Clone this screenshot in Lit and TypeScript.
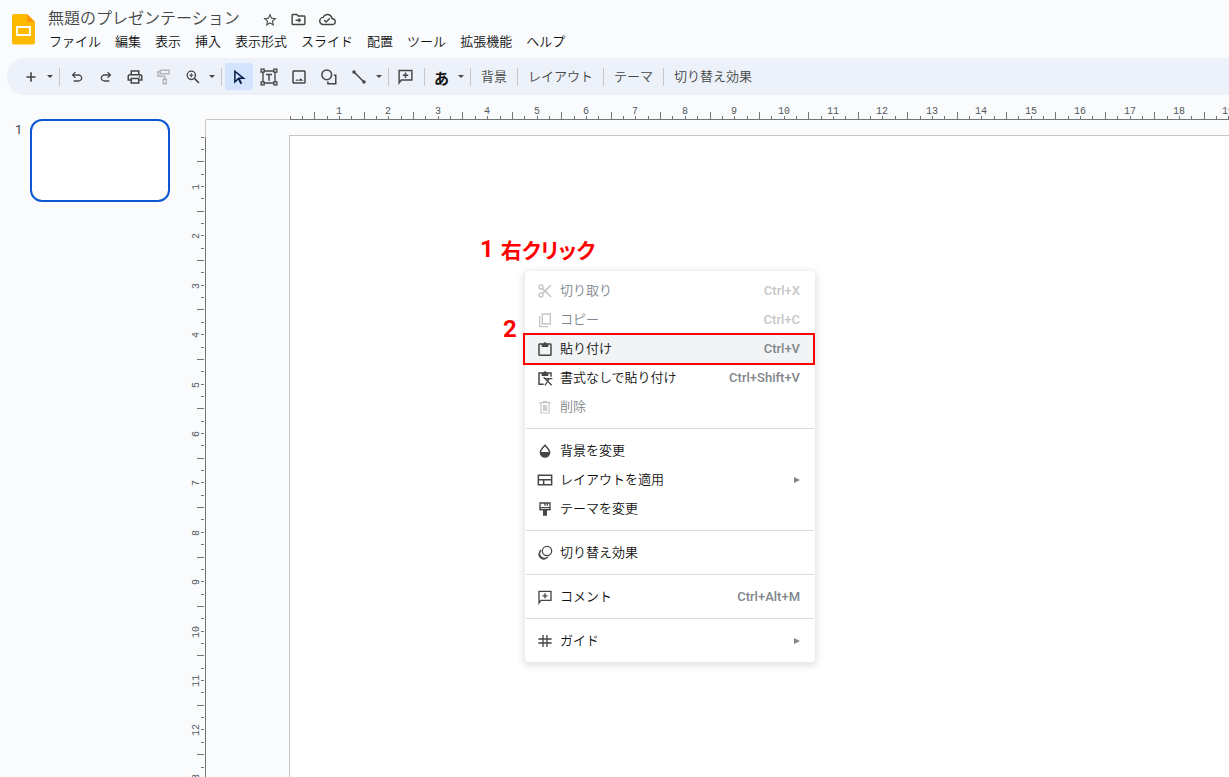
import { LitElement, html, svg, css, nothing, type SVGTemplateResult } from "lit";
import { customElement, property, state } from "lit/decorators.js";
import { classMap } from "lit/directives/class-map.js";

const stroke = (d: string, w = 2) =>
  svg`<path d=${d} fill="none" stroke="currentColor" stroke-width=${w}></path>`;
const fill = (d: string) => svg`<path d=${d} fill="currentColor" fill-rule="evenodd"></path>`;

const UNDO =
  "M7 19v-2h7.1q1.575 0 2.737-1T18 13.5q0-1.5-1.163-2.5T14.1 10H7.8l2.6 2.6L9 14 4 9l5-5 1.4 1.4L7.8 8h6.3q2.425 0 4.163 1.575T20 13.5q0 2.35-1.737 3.925T14.1 19z";
const CLIP = "M7 4h3a2 2 0 0 1 4 0h3v5H7z";

const ICONS: Record<string, SVGTemplateResult> = {
  star: fill(
    "M22 9.24l-7.19-.62L12 2 9.19 8.63 2 9.24l5.46 4.73L5.82 21 12 17.27 18.18 21l-1.63-7.03L22 9.24zM12 15.4l-3.76 2.27 1-4.28-3.32-2.88 4.38-.38L12 6.1l1.71 4.04 4.38.38-3.32 2.88 1 4.28L12 15.4z"
  ),
  move: svg`${fill(
    "M20 6h-8l-2-2H4c-1.1 0-2 .9-2 2v12c0 1.1.9 2 2 2h16c1.1 0 2-.9 2-2V8c0-1.1-.9-2-2-2zm0 12H4V6h5.17l2 2H20v10z"
  )}${fill("M12 12V9l4 4-4 4v-3H8v-2z")}`,
  cloud: fill(
    "M19.35 10.04C18.67 6.59 15.64 4 12 4 9.11 4 6.6 5.64 5.35 8.04 2.34 8.36 0 10.91 0 14c0 3.31 2.69 6 6 6h13c2.76 0 5-2.24 5-5 0-2.64-2.05-4.78-4.65-4.96zM19 18H6c-2.21 0-4-1.79-4-4 0-2.05 1.53-3.76 3.56-3.97l1.07-.11.5-.95C8.08 7.14 9.94 6 12 6c2.62 0 4.88 1.86 5.39 4.43l.3 1.5 1.53.11c1.56.1 2.78 1.41 2.78 2.96 0 1.65-1.35 3-3 3zm-9-3.82l-2.09-2.09L6.5 13.5 10 17l6.01-6.01-1.41-1.41z"
  ),
  plus: stroke("M12 5v14M5 12h14", 2.4),
  undo: fill(UNDO),
  redo: svg`<g transform="translate(24 0) scale(-1 1)">${fill(UNDO)}</g>`,
  print: svg`${fill(
    "M19 8h-1V3H6v5H5c-1.66 0-3 1.34-3 3v6h4v4h12v-4h4v-6c0-1.66-1.34-3-3-3zM8 5h8v3H8V5zm8 12v2H8v-4h8v2zm2-2v-2H6v2H4v-4c0-.55.45-1 1-1h14c.55 0 1 .45 1 1v4h-2z"
  )}<circle cx="18" cy="11.5" r="1" fill="currentColor"></circle>`,
  roller: stroke("M7 3h12v4.500H7zM7 5H4v6h9v4M11 15h4v6h-4z"),
  zoom: svg`${stroke("M14.500 14.500L21 21", 2.4)}<circle cx="9.500" cy="9.500" r="6.200" fill="none" stroke="currentColor" stroke-width="2"></circle>${stroke("M9.500 6.500v6M6.500 9.500h6", 1.6)}`,
  cursor: svg`${stroke("M6.500 4.500l11.500 9h-6.300l-5.200 5z")}${stroke("M11.500 13.500l3.500 7.500", 2.6)}`,
  textbox: svg`${stroke("M4 4h16v16H4z", 1.8)}${[
    [1, 1], [18, 1], [1, 18], [18, 18],
  ].map(
    ([x, y]) =>
      svg`<rect x=${x + 0.5} y=${y + 0.5} width="4" height="4" fill="#edf2fa" stroke="currentColor" stroke-width="1.800"></rect>`
  )}${stroke("M8 8.500h8M12 8.500V17")}`,
  image: fill(
    "M19 5v14H5V5h14m0-2H5c-1.100 0-2 .9-2 2v14c0 1.100.9 2 2 2h14c1.100 0 2-.9 2-2V5c0-1.100-.9-2-2-2zm-5 10.500l-2.500 3-1.800-2L7 17h11z"
  ),
  shape: svg`<circle cx="9" cy="9" r="6.500" fill="none" stroke="currentColor" stroke-width="2"></circle>${stroke("M18.500 9.500H21V21H10.500v-3")}`,
  line: svg`${stroke("M4.500 4.500l15 15", 2.4)}<circle cx="4.500" cy="4.500" r="2.600" fill="currentColor"></circle><circle cx="19.500" cy="19.500" r="2.600" fill="currentColor"></circle>`,
  comment: svg`${stroke("M3 21V3.500h18V17H6z")}${stroke("M12 6.500v7.500M8.200 10.200h7.600")}`,
  cut: svg`<circle cx="6" cy="6" r="3" fill="none" stroke="currentColor" stroke-width="2"></circle><circle cx="6" cy="18" r="3" fill="none" stroke="currentColor" stroke-width="2"></circle>${stroke("M8 8l13 13M8 16L21 3", 2.6)}`,
  copy: stroke("M8 3h12v15H8zM4 6v16h13", 2),
  paste: svg`<rect x="3" y="4.500" width="18" height="17" rx="1" fill="none" stroke="currentColor" stroke-width="2.200"></rect>${fill(CLIP)}`,
  pastePlain: svg`${stroke("M10 21.500H3v-17h18V10", 2.2)}${fill(CLIP)}${stroke("M12 13h11M18 13l-2 4M10 11l12 12M15 18l-3 5", 2)}`,
  trash: stroke("M3.500 5.500h17M9 4h6M6 6v15h12V6M10 9v9M12 9v9M14 9v9", 1.8),
  drop: svg`${stroke("M12 3.500c-3.500 4-7 7-7 10.500a7 7 0 0 0 14 0C19 10.500 15.500 7.500 12 3.500z", 2.2)}${fill("M4.500 13.500h15a7.500 7.500 0 0 1-15 0z")}`,
  layout: stroke("M2 5h20v14H2zM2 11.500h20M10 11.500V19", 2.2),
  brush: svg`${stroke("M4.500 13V3h15v10zM4.500 10h15M12 3v4M15.500 3v4")}${fill("M4 12h16v2h-5v8H9v-8H4z")}`,
  transition: svg`<g fill="none" stroke="currentColor" stroke-width="1.900"><circle cx="15" cy="9" r="7"></circle><path d="M6 7.500a7 7 0 1 0 10.500 10.500"></path><path d="M4 10.500a7 7 0 0 0 9.500 9.500"></path></g>`,
  guide: stroke("M9 3v18M15 3v18M2 9h20M2 15h20"),
};

@customElement("ui-icon")
export class UiIcon extends LitElement {
  @property() name = "";
  @property({ type: Number }) size = 18;

  static styles = css`
    :host {
      display: inline-flex;
      flex: none;
    }
  `;

  render() {
    return html`<svg width=${this.size} height=${this.size} viewBox="0 0 24 24" aria-hidden="true">
      ${ICONS[this.name]}
    </svg>`;
  }
}

/** Centimetre ruler: a short tick each quarter, a long one at the half, a number at the whole. */
@customElement("slide-ruler")
export class SlideRuler extends LitElement {
  @property({ type: Boolean }) vertical = false;
  @property({ type: Number }) origin = 0;
  @state() private extent = 0;

  private observer = new ResizeObserver(() => this.measure());

  static styles = css`
    :host {
      display: block;
      overflow: hidden;
    }
    svg {
      display: block;
      width: 100%;
      height: 100%;
    }
    .tick {
      fill: #747775;
    }
    .rest {
      fill: #c7c7c7;
    }
    text {
      font: 10px "Liberation Mono", monospace;
      fill: #55585c;
      text-anchor: middle;
    }
  `;

  connectedCallback() {
    super.connectedCallback();
    this.observer.observe(this);
    this.measure();
  }

  disconnectedCallback() {
    this.observer.disconnect();
    super.disconnectedCallback();
  }

  private measure() {
    this.extent = this.vertical ? this.clientHeight : this.clientWidth;
  }

  render() {
    const unit = 840 / 17;
    const ticks: SVGTemplateResult[] = [];
    for (let i = 0; ; i++) {
      const at = Math.floor(this.origin + (i * unit) / 4);
      if (at > this.extent + 4) break;
      const len = i % 4 === 2 ? 7 : 3;
      ticks.push(
        this.vertical
          ? svg`<rect class="tick" x=${14 - len} y=${at} width=${len} height="1"></rect>`
          : svg`<rect class="tick" x=${at} y=${24 - len} width="1" height=${len}></rect>`
      );
      if (i > 0 && i % 4 === 0) {
        ticks.push(
          this.vertical
            ? svg`<text transform="translate(9 ${at + 1}) rotate(-90)">${i / 4}</text>`
            : svg`<text x=${at} y="19">${i / 4}</text>`
        );
      }
    }
    return this.vertical
      ? html`<svg>
          ${svg`<rect class="rest" x="15" y="0" width="1" height=${this.origin}></rect>
          <rect class="tick" x="15" y=${this.origin} width="1" height="100%"></rect>`}${ticks}
        </svg>`
      : html`<svg>
          ${svg`<rect class="rest" x="0" y="24" width=${this.origin} height="1"></rect>
          <rect class="tick" x=${this.origin} y="24" width="100%" height="1"></rect>`}${ticks}
        </svg>`;
  }
}

interface Item {
  icon: string;
  label: string;
  keys?: string;
  disabled?: boolean;
  active?: boolean;
  submenu?: boolean;
}

const MENU: Item[][] = [
  [
    { icon: "cut", label: "切り取り", keys: "Ctrl+X", disabled: true },
    { icon: "copy", label: "コピー", keys: "Ctrl+C", disabled: true },
    { icon: "paste", label: "貼り付け", keys: "Ctrl+V", active: true },
    { icon: "pastePlain", label: "書式なしで貼り付け", keys: "Ctrl+Shift+V" },
    { icon: "trash", label: "削除", disabled: true },
  ],
  [
    { icon: "drop", label: "背景を変更" },
    { icon: "layout", label: "レイアウトを適用", submenu: true },
    { icon: "brush", label: "テーマを変更" },
  ],
  [{ icon: "transition", label: "切り替え効果" }],
  [{ icon: "comment", label: "コメント", keys: "Ctrl+Alt+M" }],
  [{ icon: "guide", label: "ガイド", submenu: true }],
];

@customElement("context-menu")
export class ContextMenu extends LitElement {
  static styles = css`
    :host {
      display: block;
      box-sizing: border-box;
      padding: 5px 0 7px;
      background: #fff;
      border-radius: 4px;
      box-shadow: 0 2px 6px 2px rgba(60, 64, 67, 0.15);
    }
    .item {
      display: flex;
      align-items: center;
      gap: 7px;
      width: 100%;
      height: 29px;
      padding: 0 15px 0 12px;
      border: 0;
      background: none;
      color: #111;
      font: 350 13px "Noto Sans CJK JP", sans-serif;
      text-align: left;
    }
    .icon {
      color: #444746;
    }
    .label {
      flex: 1;
      padding-bottom: 2px;
    }
    .keys {
      font: 500 13px Roboto, sans-serif;
      color: #80868b;
    }
    .active {
      background: #f1f3f4;
    }
    .disabled {
      color: #80868b;
    }
    .disabled .icon,
    .disabled .keys {
      color: #c4c7c9;
    }
    .arrow {
      width: 0;
      border: solid transparent;
      border-width: 3px 0 3px 6px;
      border-left-color: #80868b;
    }
    hr {
      height: 1px;
      margin: 7px 1px;
      border: 0;
      background: #dadce0;
    }
  `;

  render() {
    return MENU.map(
      (group, g) => html`${g ? html`<hr />` : nothing}
      ${group.map(
        (m) => html`<button
          role="menuitem"
          class=${classMap({ item: true, active: !!m.active, disabled: !!m.disabled })}
          ?disabled=${m.disabled}
        >
          <ui-icon class="icon" name=${m.icon} size="16"></ui-icon>
          <span class="label">${m.label}</span>
          ${m.keys ? html`<span class="keys">${m.keys}</span>` : nothing}
          ${m.submenu ? html`<span class="arrow"></span>` : nothing}
        </button>`
      )}`
    );
  }
}

@customElement("app-root")
export class AppRoot extends LitElement {
  static styles = css`
    :host {
      display: flex;
      flex-direction: column;
      position: relative;
      height: 100vh;
      overflow: hidden;
      background: #f9fbfd;
      color: #202124;
      font: 350 13px "Noto Sans CJK JP", sans-serif;
    }
    button {
      padding: 0;
      border: 0;
      background: none;
      color: #444746;
      font: inherit;
      white-space: nowrap;
    }
    header {
      display: flex;
      gap: 12px;
      height: 53px;
      padding: 5px 0 0 12px;
    }
    .logo {
      margin-top: 9px;
    }
    .title-row {
      display: flex;
      align-items: center;
      height: 25px;
    }
    .title {
      box-sizing: border-box;
      width: 208px;
      padding: 0 0 2px 1px;
      border: 0;
      background: none;
      color: #444746;
      font: 350 16px "Noto Sans CJK JP", sans-serif;
    }
    .title-row button {
      display: grid;
      place-items: center;
      width: 29px;
      height: 25px;
      padding-top: 4px;
    }
    .menubar {
      display: flex;
      gap: 14px;
      padding-left: 2px;
    }
    .menubar button {
      height: 20px;
      color: #111;
    }
    .toolbar {
      display: flex;
      align-items: center;
      height: 37px;
      margin-left: 7px;
      padding-left: 9px;
      border-radius: 18px 0 0 18px;
      background: #edf2fa;
    }
    .group {
      display: flex;
      align-items: center;
    }
    .wide {
      gap: 1px;
    }
    .group + .group::before {
      content: "";
      width: 1px;
      height: 18px;
      margin: 0 2px 0 4px;
      background: #c7c7c7;
    }
    .tool {
      display: grid;
      place-items: center;
      width: 29px;
      height: 27px;
      border-radius: 2px;
    }
    .wide .tool {
      width: 28px;
      margin-left: 1px;
    }
    .group.wide::before {
      margin-right: 1px;
    }
    .selected {
      background: #d3e3fd;
      color: #041e49;
    }
    .faded {
      color: #b4b7ba;
    }
    .kana {
      padding-top: 2px;
      color: #111;
      font-size: 15px;
      font-weight: 700;
    }
    .caret {
      display: grid;
      place-items: center;
      width: 10px;
      height: 27px;
    }
    .caret::after {
      content: "";
      border: solid transparent;
      border-width: 3px 3px 0;
      border-top-color: #444746;
    }
    .text-tool {
      height: 27px;
      padding: 0 6px 3px 8px;
    }
    main {
      flex: 1;
      min-height: 0;
      display: grid;
      grid-template: 25px minmax(0, 1fr) / 190px 16px minmax(0, 1fr);
    }
    .filmstrip {
      grid-row: 1 / 3;
      display: flex;
      align-items: flex-start;
      padding: 24px 20px 0 15px;
      gap: 8px;
    }
    .number {
      width: 7px;
      margin-top: 2px;
      color: #444746;
      font: 13px Roboto, sans-serif;
      line-height: 18px;
    }
    .thumb {
      box-sizing: border-box;
      flex: none;
      width: 140px;
      height: 83px;
      border: 2px solid #0b57d0;
      border-radius: 12px;
      background: #fff;
    }
    .ruler-x {
      grid-area: 1 / 3;
    }
    .ruler-y {
      grid-area: 2 / 2;
    }
    .stage {
      grid-area: 2 / 3;
      display: flex;
      padding: 15px 0 0 83px;
    }
    .slide {
      flex: 1;
      border: solid #c7c7c7;
      border-width: 1px 0 0 1px;
      background: #fff;
    }
    .popup {
      position: absolute;
      left: 525px;
      top: 271px;
      width: 290px;
    }
    .note {
      position: absolute;
      display: flex;
      align-items: center;
      gap: 7px;
      height: 32px;
      color: #f00;
      font: 700 24px Roboto, sans-serif;
    }
    .ja {
      font: 700 21px "Noto Sans CJK JP", sans-serif;
      font-feature-settings: "palt";
    }
    .first {
      left: 480px;
      top: 233px;
    }
    .second {
      left: 503px;
      top: 313px;
    }
    .frame {
      position: absolute;
      box-sizing: border-box;
      left: 523px;
      top: 333px;
      width: 292px;
      height: 32px;
      border: 2px solid #f00;
    }
  `;

  private tool(name: string, label: string, size = 18, extra = "") {
    return html`<button class="tool ${extra}" aria-label=${label}>
      <ui-icon name=${name} size=${size}></ui-icon>
    </button>`;
  }

  private caret(label: string) {
    return html`<button class="caret" aria-label=${label}></button>`;
  }

  render() {
    return html`
      <header>
        <svg class="logo" width="23" height="31" viewBox="0 0 23 31" aria-hidden="true">
          <path d="M2 0h13l8 8v20.500a2 2 0 0 1-2 2H2a2 2 0 0 1-2-2V2a2 2 0 0 1 2-2z" fill="#ffba00"></path>
          <path d="M15 0l8 8h-8z" fill="#ff9800"></path>
          <path d="M5 13h13v8H5z" fill="none" stroke="#fff" stroke-width="1.800"></path>
        </svg>
        <div>
          <div class="title-row">
            <input class="title" aria-label="名前を変更" value="無題のプレゼンテーション" />
            <button aria-label="スターを付ける"><ui-icon name="star" size="16"></ui-icon></button>
            <button aria-label="移動"><ui-icon name="move" size="17"></ui-icon></button>
            <button aria-label="ドキュメントのステータス"><ui-icon name="cloud" size="17"></ui-icon></button>
          </div>
          <nav class="menubar">
            ${["ファイル", "編集", "表示", "挿入", "表示形式", "スライド", "配置", "ツール", "拡張機能", "ヘルプ"].map(
              (m) => html`<button>${m}</button>`
            )}
          </nav>
        </div>
      </header>
      <div class="toolbar" role="toolbar">
        <div class="group">${this.tool("plus", "新しいスライド", 16)}${this.caret("レイアウト付き")}</div>
        <div class="group">
          ${this.tool("undo", "元に戻す", 16)}${this.tool("redo", "やり直し", 16)}${this.tool("print", "印刷")}
          ${this.tool("roller", "書式を貼り付け", 18, "faded")}${this.tool("zoom", "ズーム", 16)}${this.caret("倍率")}
        </div>
        <div class="group wide">
          ${this.tool("cursor", "選択", 18, "selected")}${this.tool("textbox", "テキスト ボックス")}
          ${this.tool("image", "画像を挿入")}${this.tool("shape", "図形")}${this.tool("line", "線を選択", 16)}
          ${this.caret("線の種類")}
        </div>
        <div class="group">${this.tool("comment", "コメントを追加", 17)}</div>
        <div class="group">
          <button class="tool kana">あ</button>${this.caret("入力ツール")}
        </div>
        ${["背景", "レイアウト", "テーマ", "切り替え効果"].map(
          (t) => html`<div class="group"><button class="text-tool">${t}</button></div>`
        )}
      </div>
      <main>
        <aside class="filmstrip">
          <span class="number">1</span>
          <div class="thumb"></div>
        </aside>
        <slide-ruler class="ruler-x" origin="84"></slide-ruler>
        <slide-ruler class="ruler-y" vertical origin="17"></slide-ruler>
        <section class="stage"><div class="slide"></div></section>
      </main>
      <context-menu class="popup" role="menu"></context-menu>
      <div class="frame"></div>
      <div class="note first"><span>1</span><span class="ja">右クリック</span></div>
      <div class="note second">2</div>
    `;
  }
}
